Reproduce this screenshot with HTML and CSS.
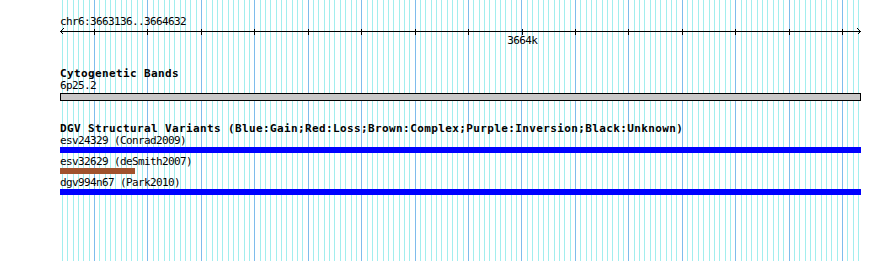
FILE: index.html
```html
<!DOCTYPE html>
<html lang="en">
<head>
  <meta charset="UTF-8">
  <title>chr6:3663136..3664632</title>
  <link rel="stylesheet" href="styles.css">
</head>
<body>
  <div class="canvas">
    <div class="coord">chr6:3663136..3664632</div>

    <!-- ruler: arrows, axis and major ticks every 100 bp -->
    <div class="ruler">
      <svg class="ruler-svg" width="801" height="9" viewBox="0 0 801 9">
        <path d="M0 3.5H801" stroke="#000" />
        <path d="M3.5 0.5L0.5 3.5L3.5 6.5M797.5 0.5L800.5 3.5L797.5 6.5" stroke="#000" fill="none" />
        <path stroke="#000" d="M34.5 1V7M87.5 1V7M141.5 1V7M194.5 1V7M248.5 1V7M301.5 1V7M355.5 1V7M408.5 1V7M462.5 1V7M515.5 1V7M568.5 1V7M622.5 1V7M675.5 1V7M729.5 1V7M782.5 1V7" />
      </svg>
      <span class="tick-label">3664k</span>
    </div>

    <div class="track cyto">
      <div class="track-title">Cytogenetic Bands</div>
      <div class="feature-label">6p25.2</div>
      <div class="band"></div>
    </div>

    <div class="track dgv">
      <div class="track-title">DGV Structural Variants (Blue:Gain;Red:Loss;Brown:Complex;Purple:Inversion;Black:Unknown)</div>
      <div class="feature">
        <div class="feature-label">esv24329 (Conrad2009)</div>
        <div class="bar gain"></div>
      </div>
      <div class="feature">
        <div class="feature-label">esv32629 (deSmith2007)</div>
        <div class="bar complex" style="width: 75px;"></div>
      </div>
      <div class="feature">
        <div class="feature-label">dgv994n67 (Park2010)</div>
        <div class="bar gain"></div>
      </div>
    </div>
  </div>
</body>
</html>
```

FILE: styles.css
```css
:root {
  --grid-minor: #a2eeee;
  --grid-major: #7ebcec;
  --gain-blue: #0000ff;
  --complex-brown: #a0522d;
  --band-gray: #c8c8c8;
}
html, body {
  margin: 0;
  padding: 0;
  background-color: #ffffff;
}
body {
  width: 890px;
  height: 261px;
  overflow: hidden;
  font-family: "DejaVu Sans Mono", "Liberation Mono", monospace;
  color: #000;
}
.canvas {
  margin-left: 60px;
  width: 801px;
  height: 261px;
  padding-top: 15px;
  box-sizing: border-box;
  background-image:
    repeating-linear-gradient(to right, var(--grid-major) 0 1px, transparent 1px 53.43px),
    repeating-linear-gradient(to right, var(--grid-minor) 0 1px, transparent 1px 5.343px);
  background-repeat: no-repeat;
  background-size: 770px 100%, 800px 100%;
  background-position: 34.2px 0, 2.1px 0;
}
.coord,
.tick-label,
.feature-label {
  font-size: 11px;
  letter-spacing: -0.62px;
  white-space: nowrap;
}
.coord {
  line-height: 13px;
}
.ruler {
  position: relative;
  height: 20px;
}
.ruler-svg {
  display: block;
  shape-rendering: crispEdges;
}
.tick-label {
  position: absolute;
  top: 6px;
  left: 462.3px;
  transform: translateX(-50%);
  line-height: 13px;
}
.track-title {
  font-weight: bold;
  font-size: 11px;
  letter-spacing: 0.38px;
  line-height: 12px;
  white-space: nowrap;
}
.feature-label {
  line-height: 12px;
}
.cyto {
  margin-top: 20px;
}
.band {
  margin-top: 1px;
  height: 8px;
  box-sizing: border-box;
  border: 1px solid #000;
  background-color: var(--band-gray);
}
.dgv {
  margin-top: 22px;
}
.feature {
  margin-bottom: 3px;
}
.bar {
  height: 6px;
  width: 801px;
}
.gain {
  background-color: var(--gain-blue);
}
.complex {
  background-color: var(--complex-brown);
}
```
